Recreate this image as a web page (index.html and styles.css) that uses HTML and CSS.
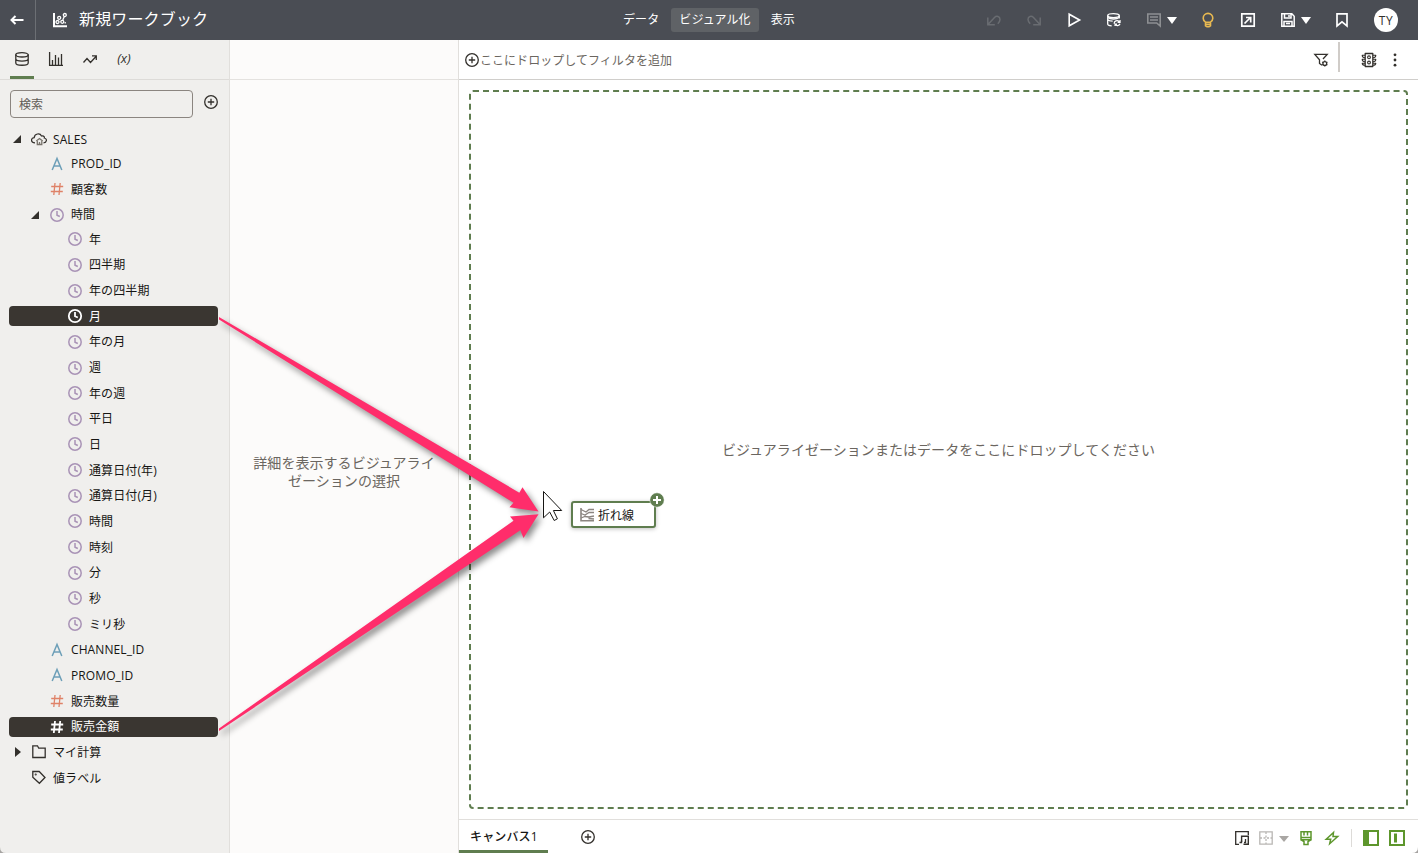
FILE: index.html
```html
<!DOCTYPE html>
<html lang="ja">
<head>
  <meta charset="UTF-8">
  <title>新規ワークブック</title>
  <link rel="stylesheet" href="styles.css">
</head>
<body>
  <svg width="0" height="0" class="defs">
    <symbol id="clock" viewBox="0 0 16 16"><circle cx="8" cy="8" r="6.2"/><path d="M8 4v4.2l2.8 1.3"/></symbol>
    <symbol id="hash" viewBox="0 0 16 16"><path d="M6 2 4.8 14M11.2 2 10 14M2.2 5.5h12M1.8 10.5h12"/></symbol>
    <symbol id="attr" viewBox="0 0 16 16"><path d="M3.2 14 8 2.5 12.8 14M5 10h6"/></symbol>
    <symbol id="plus" viewBox="0 0 16 16"><circle cx="8" cy="8" r="6.3"/><path d="M8 4.8v6.4M4.8 8h6.4"/></symbol>
  </svg>

  <header class="header">
    <div class="back">
      <svg class="icon" viewBox="0 0 16 16"><path d="M14.5 8H3M6.5 4 2.5 8l4 4" stroke-width="2"/></svg>
    </div>
    <div class="title">
      <svg class="icon" viewBox="0 0 16 16"><path d="M2 1v13.200H15" stroke-width="2"/><circle cx="5.500" cy="10" r="1.500"/><circle cx="7.200" cy="5.800" r="1.500"/><circle cx="10.300" cy="9.800" r="1.500"/><circle cx="12.800" cy="3" r="1.500"/><path d="M12.300 4.500 10.800 8M13.200 10v1.500"/></svg>
      <h1>新規ワークブック</h1>
    </div>
    <nav class="modes">
      <span>データ</span>
      <span class="active">ビジュアル化</span>
      <span>表示</span>
    </nav>
    <div class="actions">
      <svg class="icon off" viewBox="0 0 16 16"><path d="M1.800 5.500v7.200h7M2 12.500l6.500-7c2-2 5.500-1.300 5.500 2 0 1.900-1 3-2.200 4.200" stroke-width="1.500"/></svg>
      <svg class="icon off" viewBox="0 0 16 16"><path d="M14.200 5.500v7.200h-7M14 12.500l-6.500-7C5.500 3.500 2 4.200 2 7.500c0 1.900 1 3 2.200 4.200" stroke-width="1.500"/></svg>
      <svg class="icon" viewBox="0 0 16 16"><path d="M3.200 2.200v11.600L13.600 8z" stroke-width="1.600"/></svg>
      <svg class="icon" viewBox="0 0 16 16"><ellipse cx="7.500" cy="3.600" rx="5.800" ry="2"/><path d="M1.700 3.600v8.400c0 1 1.500 1.700 4 1.900M1.700 7.500c.8 1.200 3 1.600 5 1.600M13.300 3.600v3M2 5.500c2 2 9 2 11 0"/><path d="M8.200 11.800a2.800 2.800 0 0 1 5-2M14 8v2.400h-2.400M9 14l.2-1.800h1.800M9.200 12.500c1 1.700 4 1.500 4.800-.7" stroke-width="1.300"/></svg>
      <div class="split">
        <svg class="icon dim" viewBox="0 0 16 16"><path d="M1.800 2h12.400v12l-3.500-3H1.800zM4 5h8M4 8h8" stroke-width="1.600"/></svg>
        <i class="caret"></i>
      </div>
      <svg class="icon bulb" viewBox="0 0 16 16"><path d="M5.500 10.200C4 9.200 3.200 7.800 3.200 6.200a4.800 4.800 0 0 1 9.600 0c0 1.600-.8 3-2.300 4zM5.500 10v3.800l1.500.9h2l1.500-.9V10M5.500 12.400h5" stroke-width="1.600"/></svg>
      <svg class="icon" viewBox="0 0 16 16"><path d="M1.800 1.800h12.400v12.400H1.800zM4.500 11.500l6-6M6 5.500h4.700v5" stroke-width="1.700"/></svg>
      <div class="split">
        <svg class="icon" viewBox="0 0 16 16"><path d="M1.800 1.800h10l2.400 2.400v10H1.800zM4.500 2v4h6.500V2M9 3v2M4 14V9.500h8V14M6 11.500h4" stroke-width="1.500"/></svg>
        <i class="caret"></i>
      </div>
      <svg class="icon" viewBox="0 0 16 16"><path d="M3 1.800h10V14L8 9.800 3 14z" stroke-width="1.700"/></svg>
      <div class="avatar">TY</div>
    </div>
  </header>

  <main class="workspace">
    <aside class="data-panel">
      <div class="panel-tabs">
        <div class="tab active"><svg class="icon" viewBox="0 0 16 16"><ellipse cx="8" cy="3.800" rx="6.200" ry="2.200"/><path d="M1.800 3.600v8.400c0 3 12.400 3 12.400 0V3.600M1.800 7.800c0 3 12.400 3 12.400 0"/></svg></div>
        <div class="tab"><svg class="icon" viewBox="0 0 16 16"><path d="M1.600 1v13.400H15M4.500 14V9M7.500 14V4M10.500 14V6.500M13.500 14V3"/></svg></div>
        <div class="tab"><svg class="icon" viewBox="0 0 16 16"><path d="m1.500 11.500 3.500-4 3.500 4 5.500-6M10 4.800h4.300V9"/></svg></div>
        <div class="tab fx">(x)</div>
      </div>
      <div class="search-row">
        <div class="search">検索</div>
        <svg class="icon" viewBox="0 0 16 16"><use href="#plus"/></svg>
      </div>

      <div class="tree">
        <div class="row l0 group"><i class="open"></i><svg class="icon" viewBox="0 0 16 16"><path d="M4 11.800c-4.500 0-4.500-4.800-.8-5.200C3.600 2.600 9 1.600 10.500 5c3-.6 3 1.500 2.800 2 3.200.8 2.600 4.500-.8 4.800" stroke-width="1.200"/><path d="M5.300 10 8.500 7.500l3.200 2.500M6.300 10v3.500h4.500V10M8.500 13.500V11" stroke="#77726b"/></svg><span>SALES</span></div>
        <div class="row l1"><svg class="icon attr"><use href="#attr"/></svg><span>PROD_ID</span></div>
        <div class="row l1"><svg class="icon hash"><use href="#hash"/></svg><span>顧客数</span></div>
        <div class="row l1 group"><i class="open"></i><svg class="icon clock"><use href="#clock"/></svg><span>時間</span></div>
        <div class="row l2"><svg class="icon clock"><use href="#clock"/></svg><span>年</span></div>
        <div class="row l2"><svg class="icon clock"><use href="#clock"/></svg><span>四半期</span></div>
        <div class="row l2"><svg class="icon clock"><use href="#clock"/></svg><span>年の四半期</span></div>
        <div class="row l2 selected"><svg class="icon clock"><use href="#clock"/></svg><span>月</span></div>
        <div class="row l2"><svg class="icon clock"><use href="#clock"/></svg><span>年の月</span></div>
        <div class="row l2"><svg class="icon clock"><use href="#clock"/></svg><span>週</span></div>
        <div class="row l2"><svg class="icon clock"><use href="#clock"/></svg><span>年の週</span></div>
        <div class="row l2"><svg class="icon clock"><use href="#clock"/></svg><span>平日</span></div>
        <div class="row l2"><svg class="icon clock"><use href="#clock"/></svg><span>日</span></div>
        <div class="row l2"><svg class="icon clock"><use href="#clock"/></svg><span>通算日付(年)</span></div>
        <div class="row l2"><svg class="icon clock"><use href="#clock"/></svg><span>通算日付(月)</span></div>
        <div class="row l2"><svg class="icon clock"><use href="#clock"/></svg><span>時間</span></div>
        <div class="row l2"><svg class="icon clock"><use href="#clock"/></svg><span>時刻</span></div>
        <div class="row l2"><svg class="icon clock"><use href="#clock"/></svg><span>分</span></div>
        <div class="row l2"><svg class="icon clock"><use href="#clock"/></svg><span>秒</span></div>
        <div class="row l2"><svg class="icon clock"><use href="#clock"/></svg><span>ミリ秒</span></div>
        <div class="row l1"><svg class="icon attr"><use href="#attr"/></svg><span>CHANNEL_ID</span></div>
        <div class="row l1"><svg class="icon attr"><use href="#attr"/></svg><span>PROMO_ID</span></div>
        <div class="row l1"><svg class="icon hash"><use href="#hash"/></svg><span>販売数量</span></div>
        <div class="row l1 selected"><svg class="icon hash"><use href="#hash"/></svg><span>販売金額</span></div>
        <div class="row l0"><i class="closed"></i><svg class="icon" viewBox="0 0 16 16"><path d="M1.800 13.500V1.800h4.700l1.200 2.400h6.500v9.300z"/></svg><span>マイ計算</span></div>
        <div class="row l0"><svg class="icon" viewBox="0 0 16 16"><path d="M1.800 1.500h6.400l5.800 6-5.600 5.800-6.600-6z"/><circle cx="4.700" cy="4.500" r=".4"/></svg><span>値ラベル</span></div>
      </div>
    </aside>

    <section class="grammar">
      <div class="grammar-top"></div>
      <p>詳細を表示するビジュアライ<br>ゼーションの選択</p>
    </section>

    <section class="canvas">
      <div class="filter-bar">
        <svg class="icon" viewBox="0 0 16 16"><use href="#plus"/></svg>
        <span>ここにドロップしてフィルタを追加</span>
        <div class="filter-tools">
          <svg class="icon" viewBox="0 0 16 16"><path d="M9 13.200 6.500 11.500V7.800L1.800 2.400h12.400L10 7"/><circle cx="11.800" cy="11.500" r="1.900"/><path d="M11.800 8.500v1M11.800 13.500v1M9.200 10l.9.500M13.500 12.500l.9.500M9.200 13l.9-.5M13.500 10.500l.9-.5"/></svg>
          <i class="sep"></i>
          <svg class="icon" viewBox="0 0 16 16" stroke-linejoin="round"><path d="M4.200 1.500h7.600v13H4.200z"/><path d="M4 3.300H1.200c0 1.600 1 2.400 2.800 2.400M4 7.300H1.200c0 1.600 1 2.400 2.800 2.400M4 11.200H1.200c0 1.500 1 2 2.800 2M12 3.300h2.800c0 1.600-1 2.400-2.800 2.400M12 7.300h2.800c0 1.600-1 2.400-2.800 2.400M12 11.200h2.800c0 1.500-1 2-2.800 2" stroke-width="1.100"/><circle cx="8" cy="5.300" r="1.400" stroke-width="1.100"/><circle cx="8" cy="10.500" r="1.400" stroke-width="1.100"/></svg>
          <svg class="icon solid" viewBox="0 0 16 16"><circle cx="8" cy="2.800" r="1.400"/><circle cx="8" cy="8" r="1.400"/><circle cx="8" cy="13.200" r="1.400"/></svg>
        </div>
      </div>

      <div class="drop-zone">ビジュアライゼーションまたはデータをここにドロップしてください</div>

      <footer class="canvas-tabs">
        <div class="canvas-tab">キャンバス1</div>
        <svg class="icon" viewBox="0 0 16 16"><use href="#plus"/></svg>
        <div class="canvas-tools">
          <svg class="icon" viewBox="0 0 16 16"><path d="M14.300 5V1.700H1.700v12.600H5"/><path d="M7.600 12V6.200h6.700v8H9.500" stroke-width="1.400"/><path d="M5.500 12.500h2v-2M11.500 9v3.500h-1.500" stroke-width="1.300"/></svg>
          <svg class="icon light" viewBox="0 0 16 16"><path d="M1.800 1.800h12.400v12.400H1.800z"/><path d="M8 2v12M2 8h12" stroke-dasharray="2 1.500"/></svg>
          <i class="caret"></i>
          <svg class="icon green" viewBox="0 0 16 16"><path d="M3 1.800h10v8H3zM6 2v3.500M9.500 2v3.500M3 7.500h10M3 9.800l3 1.700v3h4v-3l3-1.700" stroke-width="1.500"/></svg>
          <svg class="icon green" viewBox="0 0 16 16"><path d="M9.500 2.500 2.200 9.200h4.500l-1 4.500 8-7.200H9z" stroke-width="1.500"/></svg>
          <i class="sep"></i>
          <svg class="icon green" viewBox="0 0 16 16"><path d="M1 1h14v14H1z" stroke-width="2"/><path d="M1 1h5v14H1z" class="fill"/></svg>
          <svg class="icon green" viewBox="0 0 16 16"><path d="M1 1h14v14H1z" stroke-width="2"/><path d="M5 3.500h3v9H5z" class="fill"/></svg>
        </div>
      </footer>
    </section>
  </main>

  <!-- drag feedback -->
  <div class="drag-chip">
    <svg class="icon" viewBox="0 0 16 16"><path d="M2 1v12.800h13" stroke-width="1.600"/><path d="M2 2.500l5 2.500 3-2.500h5M2 6.500l4 1.500 4-2.500h5M2 11l4-1.500 4 .5 5-1M9.500 11.500l5.500.5" stroke-width="1.300"/></svg>
    <span>折れ線</span>
    <svg class="badge" viewBox="0 0 16 16"><circle cx="8" cy="8" r="7.200"/><path d="M8 4v8M4 8h8"/></svg>
  </div>
  <svg class="overlay" viewBox="0 0 1418 853">
    <g class="arrows">
      <path d="M219 317 519.300 492.700 522.500 487.300 538.500 511.500 509.500 507.300 513.500 502.700 219 319.500z"/>
      <path d="M219 728.500 513.500 520.700 510 516.500 538.500 514.300 523.500 538 520.300 530.300 219 731z"/>
    </g>
    <path class="pointer" d="M543.500 491.500v26.300l6.200-5.800 4.500 8.500 3.200-1.700-4-8.300h8.300z"/>
    <path class="corner" d="M0 847q0 6 6 6H0zM1418 847q0 6-6 6h6z"/>
  </svg>
</body>
</html>
```

FILE: styles.css
```css
* {
  box-sizing: border-box;
}

body {
  margin: 0;
  height: 853px;
  overflow: hidden;
  display: flex;
  flex-direction: column;
  color: #161513;
  background: #fff;
  font: 12px/16px "Open Sans", "Noto Sans CJK JP", sans-serif;
}

.defs {
  position: absolute;
}

.icon {
  width: 16px;
  height: 16px;
  flex: none;
  display: block;
  fill: none;
  stroke: currentColor;
  stroke-width: 1.3;
}

.caret {
  border: 5px solid transparent;
  border-top: 7px solid currentColor;
  border-bottom: 0;
}

/* header */
.header {
  height: 40px;
  flex: none;
  display: flex;
  align-items: center;
  background: #4a4d54;
  color: #fff;
}

.back {
  width: 36px;
  height: 40px;
  padding: 12px 0 0 9px;
  border-right: 1px solid #6c6f74;
}

.title {
  width: 579px;
  padding-left: 16px;
  display: flex;
  align-items: center;
  gap: 11px;
}

h1 {
  margin: 0 0 2px;
  font-size: 16px;
  line-height: 24px;
  font-weight: 400;
  letter-spacing: 0.15px;
}

.modes {
  display: flex;
  gap: 4px;
}

.modes span {
  padding: 4px 8px;
  border-radius: 3px;
  letter-spacing: 0.1px;
}

.modes .active {
  background: #5f6266;
}

.actions {
  margin-left: auto;
  padding-right: 20px;
  display: flex;
  align-items: center;
  gap: 24px;
}

.split {
  display: flex;
  align-items: center;
  gap: 5px;
  margin-right: -1px;
}

.split .caret {
  margin-top: 1px;
}

.off {
  color: #696c71;
}

.dim {
  color: #8d8f92;
}

.bulb {
  color: #e8b951;
}

.avatar {
  width: 24px;
  height: 24px;
  border-radius: 50%;
  background: #fff;
  color: #33302c;
  line-height: 25px;
  letter-spacing: 0.5px;
  text-align: center;
}

.workspace {
  flex: 1;
  min-height: 0;
  display: flex;
}

/* data panel */
.data-panel {
  width: 230px;
  background: #f0efed;
  border-right: 1px solid #e1dfdc;
}

.panel-tabs {
  height: 40px;
  padding-left: 10px;
  display: flex;
  gap: 10px;
  border-bottom: 1px solid #dddbd8;
}

.tab {
  width: 24px;
  padding: 11px 0 0 4px;
  color: #33302c;
}

.tab.active {
  border-bottom: 3px solid #5f7d4f;
}

.tab.fx {
  padding: 10px 0 0;
  text-align: center;
  font-size: 13px;
  font-style: italic;
}

.search-row {
  display: flex;
  padding: 10px;
  color: #33302c;
}

.search {
  width: 183px;
  height: 28px;
  padding: 6px 8px;
  margin-right: 10px;
  border: 1px solid #8b8580;
  border-radius: 4px;
  color: #5f5b56;
}

.search-row .icon {
  margin-top: 4px;
}

.tree {
  margin: 1.4px 11px 0 9px;
}

.row {
  height: 20px;
  margin-bottom: 5.67px;
  display: flex;
  align-items: center;
  gap: 6px;
  border-radius: 4px;
}

.row span {
  padding-top: 1px;
  letter-spacing: 0.1px;
}

.row.group {
  margin-bottom: 4.27px;
}

.row:not(.selected) > .icon:not(.clock):not(.hash):not(.attr) {
  color: #33302c;
}

.l0 { padding-left: 22px; }
.l1 { padding-left: 40px; }
.l2 { padding-left: 58px; }

.open {
  margin-left: -18px;
  margin-right: 4px;
  border-left: 8px solid transparent;
  border-bottom: 8px solid #33302c;
}

.closed {
  margin-left: -16px;
  margin-right: 4px;
  border: 5px solid transparent;
  border-left: 6px solid #33302c;
  border-right: 0;
}

.clock {
  color: #a993b6;
  stroke-width: 1.5;
}

.hash {
  color: #df8268;
}

.attr {
  color: #6d9fb8;
  stroke-width: 1.5;
}

.selected {
  background: #3a3631;
  color: #fff;
}

.selected .icon {
  color: #fff;
  stroke-width: 1.8;
}

/* grammar panel */
.grammar {
  width: 229px;
  background: #fcfbfa;
  border-right: 1px solid #e1dfdc;
}

.grammar-top {
  height: 40px;
  border-bottom: 1px solid #e4e2df;
}

.grammar p {
  margin: 374px 0 0;
  font-size: 14px;
  line-height: 18px;
  letter-spacing: 0.05px;
  text-align: center;
  color: #6b6660;
}

/* canvas */
.canvas {
  flex: 1;
  display: flex;
  flex-direction: column;
}

.filter-bar {
  height: 40px;
  padding-left: 5px;
  display: flex;
  align-items: center;
  border-bottom: 1px solid #d0cecb;
  color: #33302c;
}

.filter-bar span {
  padding-top: 2px;
  letter-spacing: 0.04px;
  color: #6b6660;
}

.filter-tools {
  margin-left: auto;
  padding-right: 15px;
  display: flex;
  align-items: center;
}

.filter-tools .sep {
  width: 2px;
  height: 30px;
  margin: -6px 21px 0 9px;
  background: #d0ccc8;
}

.filter-tools .solid {
  margin-left: 10px;
}

.solid,
.fill {
  fill: currentColor;
  stroke: none;
}

.drop-zone {
  flex: 1;
  margin: 10px;
  border: 2px dashed #5f7d4f;
  border-radius: 4px;
  display: flex;
  align-items: center;
  justify-content: center;
  font-size: 14px;
  letter-spacing: 0.05px;
  color: #6b6660;
}

.canvas-tabs {
  height: 34px;
  display: flex;
  align-items: center;
  border-top: 1px solid #e1dfdc;
}

.canvas-tabs > .icon {
  color: #33302c;
}

.canvas-tab {
  width: 89px;
  height: 33px;
  padding: 9px 0 0 11px;
  margin-right: 32px;
  border-bottom: 3px solid #5f7d4f;
  font-weight: 500;
  letter-spacing: 0.15px;
  white-space: nowrap;
}

.canvas-tools {
  margin: 3px 13px 0 auto;
  display: flex;
  align-items: center;
  gap: 8px;
  color: #33302c;
}

.canvas-tools .caret {
  margin: 1px 1px 0 -3px;
  color: #a9a6a3;
  border-width: 6px 5px 0;
}

.canvas-tools .sep {
  width: 1px;
  height: 18px;
  margin: 0 3px;
  background: #dddbd8;
}

.canvas-tools .green + .green {
  margin-left: 2px;
}

.canvas-tools .light {
  color: #b9b7b4;
}

.green {
  color: #5d962c;
}

/* drag feedback */
.drag-chip {
  position: absolute;
  left: 571px;
  top: 501px;
  width: 85px;
  height: 27px;
  padding-left: 6px;
  display: flex;
  align-items: center;
  gap: 3px;
  background: #fff;
  border: 2px solid #5f7d4f;
  border-radius: 3px;
  box-shadow: 0 1px 4px rgba(0, 0, 0, 0.25);
}

.drag-chip .icon {
  color: #8b8580;
}

.drag-chip span {
  padding-top: 2px;
}

.badge {
  position: absolute;
  right: -11px;
  top: -11px;
  width: 16px;
  height: 16px;
  fill: #5f7d4f;
  stroke: #fff;
  stroke-width: 2;
}

.badge circle {
  stroke-width: 0.5;
}

.overlay {
  position: absolute;
  left: 0;
  top: 0;
  width: 1418px;
  height: 853px;
}

.arrows {
  fill: #ff2d6b;
  filter: drop-shadow(3px 4px 3px rgba(0, 0, 0, 0.45));
}

.pointer {
  fill: #fff;
  stroke: #161513;
}

.corner {
  fill: #a5a3a1;
}
```
